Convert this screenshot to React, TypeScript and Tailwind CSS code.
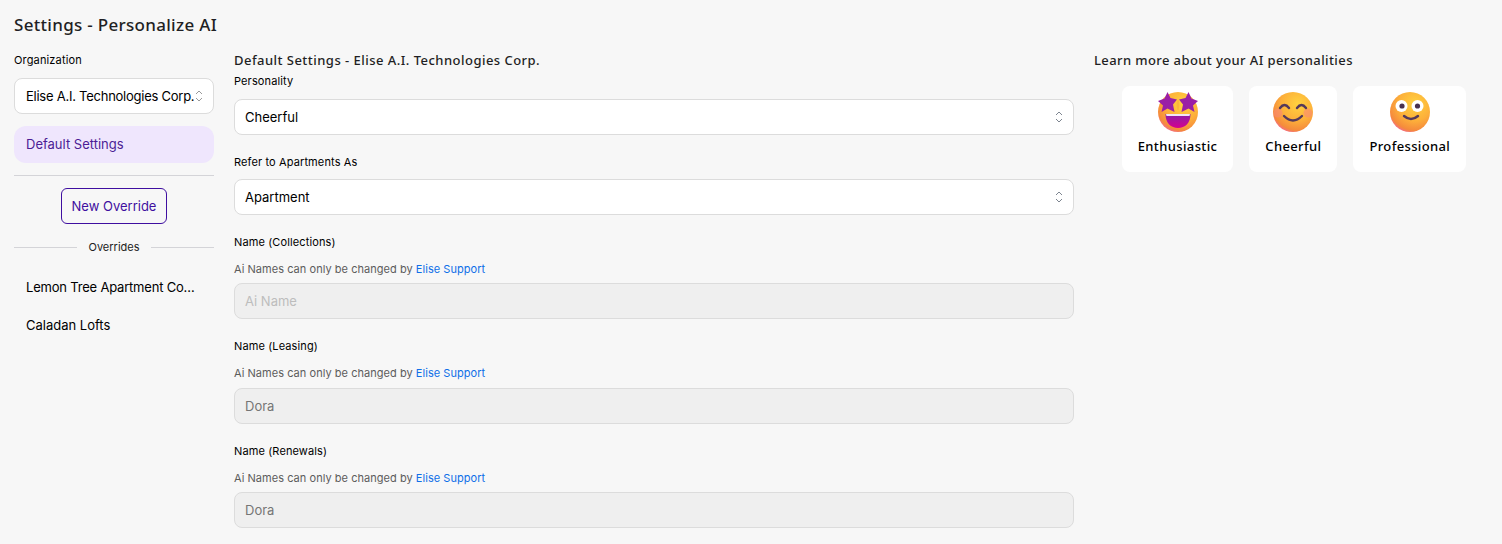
const heading = "font-['Noto_Sans',sans-serif] text-[#1f1f24]"

const Chevrons = ({ className }: { className: string }) => (
  <svg className={className} width="8" height="12" viewBox="0 0 8 12" fill="none" stroke="currentColor" strokeWidth="1">
    <path d="M1 4 L4 1 L7 4" />
    <path d="M1 8 L4 11 L7 8" />
  </svg>
)

const Select = ({ value }: { value: string }) => (
  <div className="flex h-9 items-center justify-between rounded-lg border border-[#dcdcdc] bg-white pl-[10px] pr-[10px] text-[13px] text-black">
    <span className="pt-px">{value}</span>
    <Chevrons className="text-[#7d8590]" />
  </div>
)

const LockedName = ({ label, value, placeholder }: { label: string; value: string; placeholder?: boolean }) => (
  <div className="flex flex-col">
    <div className="text-[11px] leading-[18px] tracking-[0.12px] text-black">{label}</div>
    <div className="mt-[9px] text-[11px] leading-[18px] tracking-[0.04px] text-[#5c5c5c]">
      Ai Names can only be changed by <span className="text-[#0f6fe8]">Elise Support</span>
    </div>
    <div className={`mt-[5.25px] flex h-9 items-center rounded-lg border border-[#dcdcdc] bg-[#efefef] px-[10px] pt-[1.5px] text-[13px] ${placeholder ? "text-[#bdbdbd]" : "text-[#757575]"}`}>
      {value}
    </div>
  </div>
)

const FaceDefs = ({ id }: { id: string }) => (
  <defs>
    <radialGradient id={id} cx="62%" cy="30%" r="75%">
      <stop offset="0%" stopColor="#ffd23f" />
      <stop offset="55%" stopColor="#fdb03a" />
      <stop offset="88%" stopColor="#f58a3c" />
      <stop offset="100%" stopColor="#f46a8e" />
    </radialGradient>
  </defs>
)

const StarEyes = () => (
  <svg width="40" height="40" viewBox="0 0 40 40">
    <FaceDefs id="f1" />
    <defs>
      <linearGradient id="m1" x1="0" y1="0" x2="0" y2="1">
        <stop offset="0%" stopColor="#8a1fa8" />
        <stop offset="100%" stopColor="#d6008f" />
      </linearGradient>
    </defs>
    <circle cx="20" cy="20" r="20" fill="url(#f1)" />
    <path d="M9.5 0 L12.5 6 L19 7.5 L15 12.5 L16.5 20 L9.5 16.5 L3.5 20 L5 13.5 L0 9 L6.5 6.5 Z" fill="#9a1fa6" />
    <path d="M30.5 0 L33.5 6.5 L40 9 L35 13.5 L36.5 20 L30.5 16.5 L23.5 20 L25 12.5 L21 7.5 L27.5 6 Z" fill="#9a1fa6" />
    <path d="M20 7 C21.5 10 22 14 20.5 18 H19.5 C18 14 18.5 10 20 7 Z" fill="#fbb53c" />
    <path d="M7.5 22 H32.5 C32.5 31 27 36 20 36 C13 36 7.5 31 7.5 22 Z" fill="url(#m1)" />
    <path d="M8 22 H32 L31.5 24 H8.5 Z" fill="#f1e6f5" />
  </svg>
)

const Smile = () => (
  <svg width="40" height="40" viewBox="0 0 40 40">
    <FaceDefs id="f2" />
    <circle cx="20" cy="20" r="20" fill="url(#f2)" />
    <circle cx="5" cy="21" r="4.5" fill="#f9867a" opacity="0.55" />
    <circle cx="35" cy="21" r="4.5" fill="#f9867a" opacity="0.55" />
    <g fill="none" stroke="#55395a" strokeWidth="2.4" strokeLinecap="round">
      <path d="M7 16 Q11.5 10 16 16" />
      <path d="M24 16 Q28.5 10 33 16" />
      <path d="M11 24 Q20 33 29 24" />
    </g>
  </svg>
)

const RollEyes = () => (
  <svg width="40" height="40" viewBox="0 0 40 40">
    <FaceDefs id="f3" />
    <circle cx="20" cy="20" r="20" fill="url(#f3)" />
    <circle cx="11.5" cy="14" r="6" fill="#fff" />
    <circle cx="27.5" cy="14" r="6" fill="#fff" />
    <circle cx="12" cy="14" r="2.6" fill="#47304f" />
    <circle cx="27.5" cy="14" r="2.6" fill="#47304f" />
    <path d="M14 24 Q21 30 28 24" fill="none" stroke="#55395a" strokeWidth="2.4" strokeLinecap="round" />
  </svg>
)

const PersonalityCard = ({ name, children }: { name: string; children: React.ReactNode }) => (
  <div className="flex h-[86px] flex-col items-center rounded-lg bg-white px-4 pt-[6px]">
    <div className="flex h-10 items-center justify-center">{children}</div>
    <div className={`${heading} mt-[4px] text-[13px] font-medium leading-[20px] tracking-[0.37px] text-black`}>{name}</div>
  </div>
)

export default function App() {
  return (
    <div className="h-[544px] overflow-hidden bg-[#f7f7f7] px-[14px] pt-[12px] font-['Inter',sans-serif]">
      <h1 className={`${heading} text-[17px] font-medium leading-[26px] tracking-[0.3px]`}>Settings - Personalize AI</h1>

      <div className="mt-[12px] flex gap-5">
        <aside className="flex w-[200px] shrink-0 flex-col">
          <div className="text-[11px] leading-[20px] tracking-[0.15px] text-black">Organization</div>
          <div className="mt-[8px] flex h-9 items-center justify-between rounded-lg border border-[#dcdcdc] bg-white pl-[11px] pr-[10px] text-[13px] text-black">
            <span className="whitespace-nowrap pt-px tracking-[-0.25px]">Elise A.I. Technologies Corp.</span>
            <Chevrons className="shrink-0 text-[#9a9a9a]" />
          </div>
          <div className="mt-3 flex h-[37px] items-center rounded-xl bg-[#efe6fd] px-3 text-[13px] text-[#4c1d95]">Default Settings</div>
          <div className="mt-3 border-t border-[#d4d4d8]" />
          <button className="mx-auto mt-3 h-9 w-[106px] rounded-md border border-[#3f0fa0] pt-px text-[13px] text-[#3f0fa0]">New Override</button>
          <div className="mt-[14px] flex items-center gap-[11px] text-[11px] leading-[18px] text-[#222]">
            <div className="h-px flex-1 bg-[#d4d4d8]" />
            <span>Overrides</span>
            <div className="h-px flex-1 bg-[#d4d4d8]" />
          </div>
          <div className="mt-[13px] flex flex-col text-[13px] text-black">
            <div className="flex h-[38px] items-center pl-3 pr-4">
              <span className="truncate tracking-[-0.2px]">Lemon Tree Apartment Community</span>
            </div>
            <div className="flex h-[38px] items-center px-3">Caladan Lofts</div>
          </div>
        </aside>

        <main className="flex w-[840px] shrink-0 flex-col">
          <h2 className={`${heading} text-[13px] font-medium leading-[20px] tracking-[0.47px]`}>Default Settings - Elise A.I. Technologies Corp.</h2>
          <div className="mt-[2px] text-[11px] leading-[18px] tracking-[0.12px] text-black">Personality</div>
          <div className="mt-[9px]"><Select value="Cheerful" /></div>
          <div className="mt-[18px] text-[11px] leading-[18px] tracking-[0.12px] text-black">Refer to Apartments As</div>
          <div className="mt-[8px]"><Select value="Apartment" /></div>
          <div className="mt-[17.75px] flex flex-col gap-[18.25px]">
            <LockedName label="Name (Collections)" value="Ai Name" placeholder />
            <LockedName label="Name (Leasing)" value="Dora" />
            <LockedName label="Name (Renewals)" value="Dora" />
          </div>
        </main>

        <section className="flex flex-1 flex-col">
          <h2 className={`${heading} text-[13px] font-medium leading-[20px] tracking-[0.4px]`}>Learn more about your AI personalities</h2>
          <div className="mt-4 flex w-[400px] justify-center gap-4">
            <PersonalityCard name="Enthusiastic"><StarEyes /></PersonalityCard>
            <PersonalityCard name="Cheerful"><Smile /></PersonalityCard>
            <PersonalityCard name="Professional"><RollEyes /></PersonalityCard>
          </div>
        </section>
      </div>
    </div>
  )
}
